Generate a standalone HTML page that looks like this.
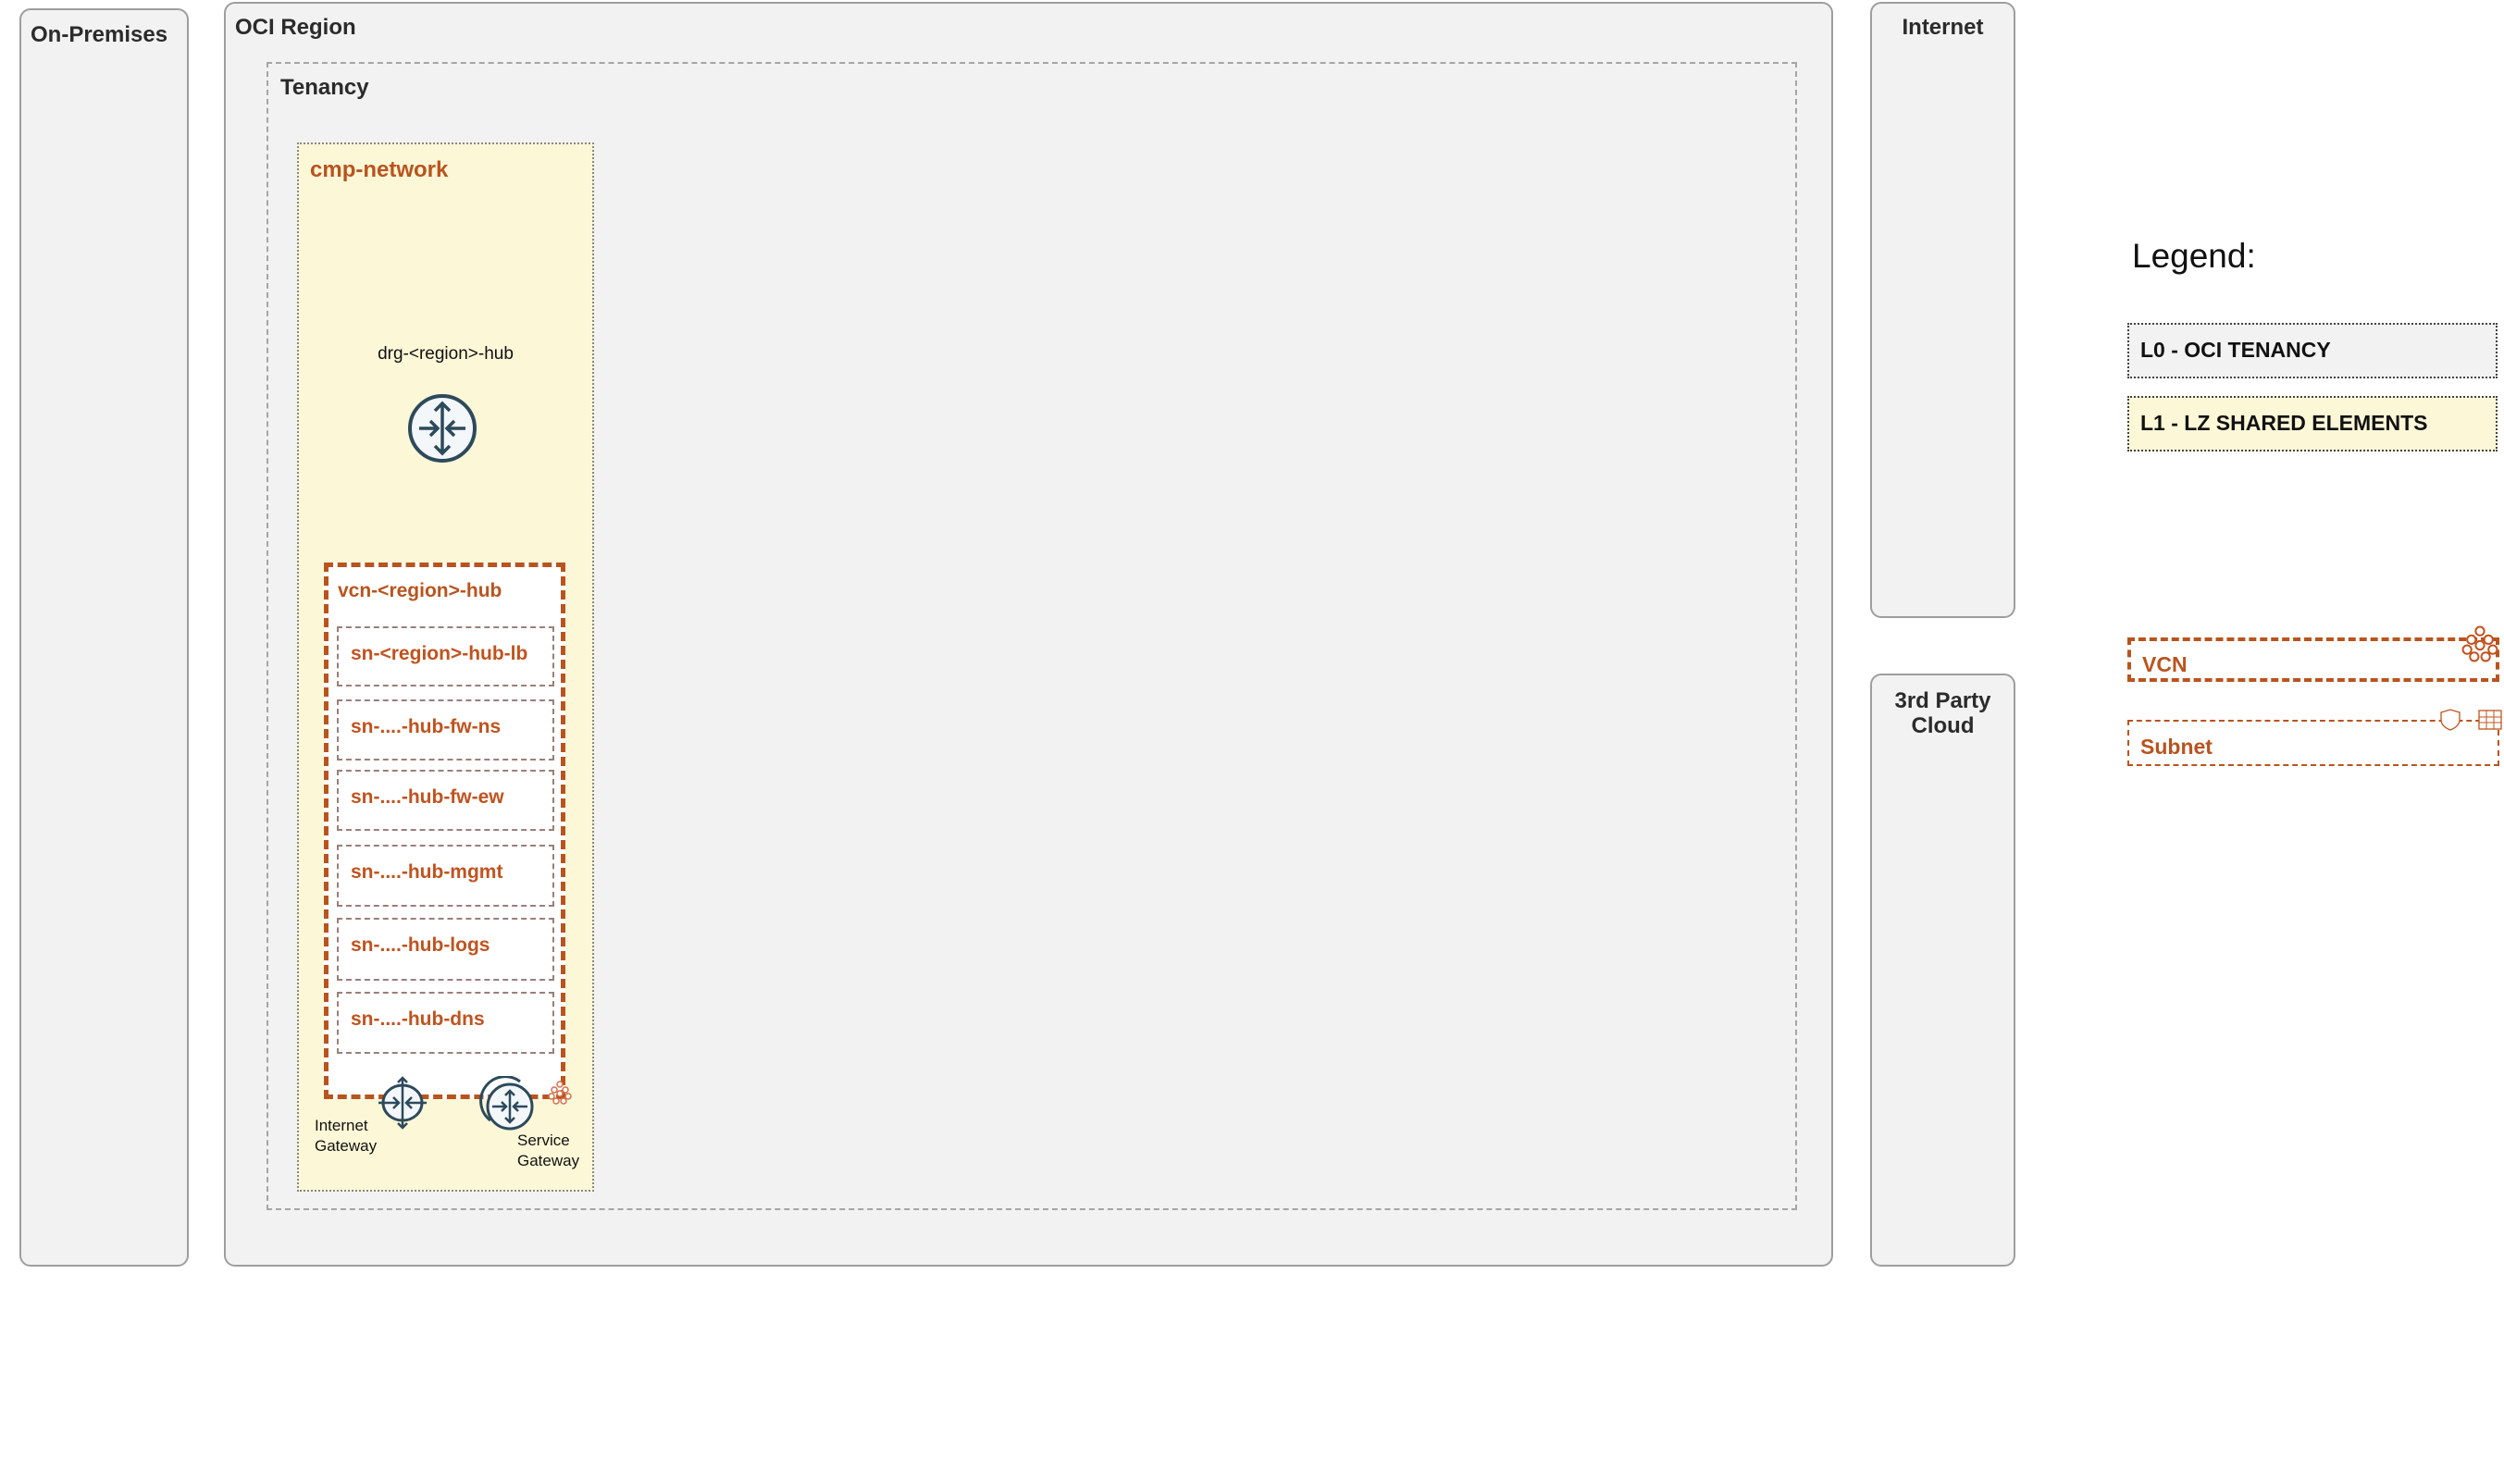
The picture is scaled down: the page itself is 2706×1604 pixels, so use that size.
<!DOCTYPE html>
<html><head><meta charset="utf-8"><style>
body{margin:0;width:2706px;height:1604px;background:#fff;position:relative;overflow:hidden;font-family:"Liberation Sans",sans-serif}
div{position:absolute;box-sizing:border-box}
.box{background:#f2f2f2;border:2px solid #9e9e9e;border-radius:12px}
.t{font-weight:bold;color:#2b2b2b;font-size:24px}
.sn{border:2px dashed #9a7f7a;background:#fff;left:364px;width:235px;color:#c0531f;font-weight:bold;font-size:21px;padding:16px 0 0 13px}
.sv{position:absolute}
</style></head><body>
<div class="box" style="left:21px;top:9px;width:183px;height:1360px"><div class="t" style="left:10px;top:13px">On-Premises</div></div>
<div class="box" style="left:242px;top:2px;width:1739px;height:1367px"><div class="t" style="left:10px;top:12px">OCI Region</div></div>
<div style="left:288px;top:67px;width:1654px;height:1241px;border:2px dashed #a5a5a5"><div class="t" style="left:13px;top:12px">Tenancy</div></div>
<div style="left:321px;top:154px;width:321px;height:1134px;background:#fcf7d7;border:2px dotted #888"><div style="left:12px;top:14px;color:#b8541f;font-weight:bold;font-size:24px">cmp-network</div></div>
<div style="left:321px;top:372px;width:321px;text-align:center;font-size:19px;color:#111">drg-&lt;region&gt;-hub</div>
<svg class="sv" style="left:439px;top:424px" width="78" height="78" viewBox="0 0 78 78"><circle cx="39" cy="39" r="35" fill="#f3f7f9" stroke="#2d4a5c" stroke-width="4"/><g stroke="#2d4a5c" stroke-width="3.5" fill="none"><path d="M39 12V66M31 20l8-8 8 8M31 58l8 8 8-8M14 39h20M26 31l8 8-8 8M64 39H44M52 31l-8 8 8 8"/></g></svg>
<div style="left:350px;top:608px;width:261px;height:580px;border:5px dashed #b8541f;background:#fff"><div style="left:10px;top:14px;color:#b8541f;font-weight:bold;font-size:21px">vcn-&lt;region&gt;-hub</div></div>
<div class="sn" style="top:677px;height:65px">sn-&lt;region&gt;-hub-lb</div>
<div class="sn" style="top:756px;height:66px">sn-....-hub-fw-ns</div>
<div class="sn" style="top:832px;height:66px">sn-....-hub-fw-ew</div>
<div class="sn" style="top:913px;height:67px">sn-....-hub-mgmt</div>
<div class="sn" style="top:992px;height:68px">sn-....-hub-logs</div>
<div class="sn" style="top:1072px;height:67px">sn-....-hub-dns</div>
<svg class="sv" style="left:405px;top:1163px" width="60" height="58" viewBox="0 0 60 58"><ellipse cx="30" cy="29" rx="21" ry="19" fill="#f3f7f9" stroke="#2d4a5c" stroke-width="3"/><g stroke="#2d4a5c" stroke-width="2.5" fill="none"><path d="M30 2V56M25 7l5-5 5 5M25 51l5 5 5-5M4 29h22M20 23l6 6-6 6M56 29H34M40 23l-6 6 6 6"/></g></svg>
<svg class="sv" style="left:518px;top:1163px" width="62" height="62" viewBox="0 0 62 62"><path d="M12 48A26 26 0 0 1 44 6" fill="none" stroke="#2d4a5c" stroke-width="3"/><circle cx="33" cy="33" r="24" fill="#f3f7f9" stroke="#2d4a5c" stroke-width="3"/><g stroke="#2d4a5c" stroke-width="2.5" fill="none"><path d="M33 16V50M28 21l5-5 5 5M28 45l5 5 5-5M14 33h15M24 28l5 5-5 5M52 33H37M42 28l-5 5 5 5"/></g></svg>
<svg class="sv" style="left:592px;top:1168px" width="26" height="26" viewBox="0 0 26 26"><g fill="#fff" stroke="#d4704a" stroke-width="1.5"><circle cx="13" cy="4" r="3"/><circle cx="7" cy="10" r="3"/><circle cx="19" cy="10" r="3"/><circle cx="4" cy="17" r="3"/><circle cx="13" cy="14" r="3"/><circle cx="22" cy="17" r="3"/><circle cx="9" cy="22" r="3"/><circle cx="17" cy="22" r="3"/></g></svg>
<div style="left:340px;top:1206px;font-size:17px;line-height:22px;color:#111">Internet<br>Gateway</div>
<div style="left:559px;top:1222px;font-size:17px;line-height:22px;color:#111">Service<br>Gateway</div>
<div class="box" style="left:2021px;top:2px;width:157px;height:666px"><div class="t" style="left:0;width:100%;text-align:center;top:12px">Internet</div></div>
<div class="box" style="left:2021px;top:728px;width:157px;height:641px"><div class="t" style="left:0;width:100%;text-align:center;top:14px;line-height:27px">3rd Party<br>Cloud</div></div>
<div style="left:2304px;top:256px;font-size:37px;color:#111">Legend:</div>
<div style="left:2299px;top:349px;width:400px;height:60px;background:#f2f2f2;border:2px dotted #444"><div style="left:12px;top:14px;font-weight:bold;font-size:23px;color:#111">L0 - OCI TENANCY</div></div>
<div style="left:2299px;top:428px;width:400px;height:60px;background:#fcf7d7;border:2px dotted #444"><div style="left:12px;top:14px;font-weight:bold;font-size:23px;color:#111">L1 - LZ SHARED ELEMENTS</div></div>
<div style="left:2299px;top:689px;width:402px;height:48px;border:4px dashed #b8541f"><div style="left:12px;top:12px;font-weight:bold;font-size:23px;color:#b8541f">VCN</div></div>
<svg class="sv" style="left:2660px;top:676px" width="40" height="40" viewBox="0 0 26 26"><g fill="#fff" stroke="#c0531f" stroke-width="1.3"><circle cx="13" cy="4" r="3"/><circle cx="7" cy="10" r="3"/><circle cx="19" cy="10" r="3"/><circle cx="4" cy="17" r="3"/><circle cx="13" cy="14" r="3"/><circle cx="22" cy="17" r="3"/><circle cx="9" cy="22" r="3"/><circle cx="17" cy="22" r="3"/></g></svg>
<div style="left:2299px;top:778px;width:402px;height:50px;border:2px dashed #b8541f"><div style="left:12px;top:14px;font-weight:bold;font-size:23px;color:#b8541f">Subnet</div></div>
<svg class="sv" style="left:2636px;top:764px" width="70" height="28" viewBox="0 0 70 28"><path d="M2 6l10-3 10 3v8c0 6-5 9-10 11C7 23 2 20 2 14z" fill="#fff" stroke="#c0531f" stroke-width="1.3"/><rect x="43" y="4" width="24" height="20" fill="#fff" stroke="#c0531f" stroke-width="1.3"/><path d="M43 11h24M43 17h24M51 4v20M59 4v20" stroke="#c0531f" stroke-width="1"/></svg>
</body></html>
